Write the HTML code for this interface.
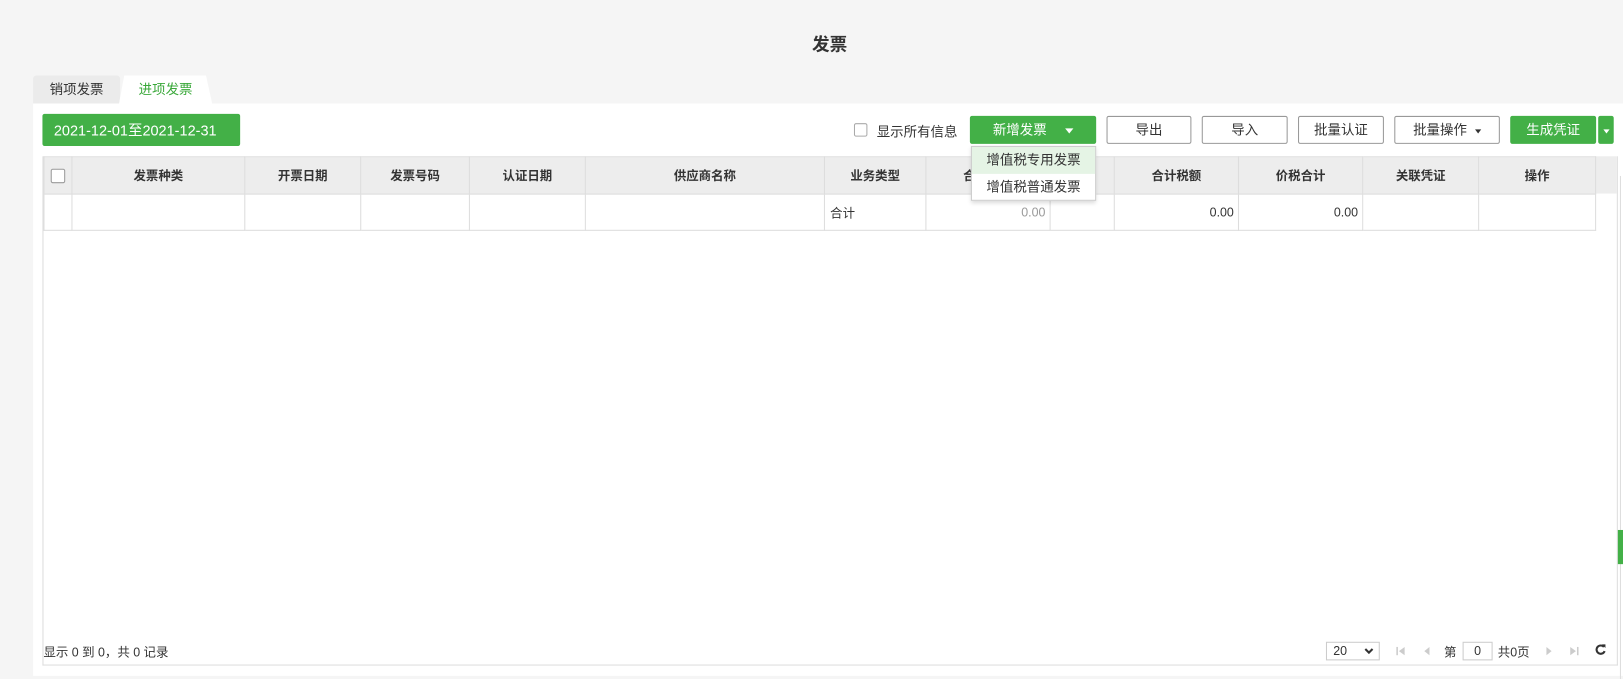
<!DOCTYPE html>
<html><head><meta charset="utf-8"><style>
*{margin:0;padding:0;box-sizing:border-box}
html,body{width:1623px;height:679px;overflow:hidden;background:#f5f5f5}
body{font-family:"Liberation Sans","Noto Sans CJK SC",sans-serif;font-size:13px;color:#333;position:relative}
#w{position:absolute;left:0;top:0;width:1568px;height:656px;transform:scale(1.0351);transform-origin:0 0}
.a{position:absolute}
.title{left:0;width:1603px;top:29px;text-align:center;font-size:17px;font-weight:bold;color:#333}
.panel{left:32px;top:100px;width:1536px;height:553px;background:#fff}
.btn{position:absolute;top:112px;height:27px;border:1px solid #999;border-radius:2px;background:#fff;text-align:center;line-height:25px;font-size:13px;color:#333}
.g{background:#43b047;border-color:#43b047;color:#fff}
.tri{display:inline-block;width:0;height:0;border-left:4px solid transparent;border-right:4px solid transparent;border-top:5px solid currentColor;vertical-align:middle}
table{border-collapse:collapse;position:absolute;left:42px;top:151px;table-layout:fixed}
td,th{border:1px solid #ddd;height:36px;font-size:12px}
th{background:#ededed;font-weight:bold;color:#333}
td{height:35px;text-align:right;padding-right:4px;color:#555}
.pg{font-size:9px;color:#ccc}
</style></head><body><div id="w">
<div class="a title">发票</div>
<div class="a" style="left:32px;top:73px;width:84px;height:27px;background:#ebebeb;border-radius:3px 3px 0 0;text-align:center;line-height:27px;color:#333">销项发票</div>
<div class="a" style="left:115px;top:73px;width:90px;height:27px;background:#fff;clip-path:polygon(5px 0,84px 0,100% 100%,0 100%);text-align:center;line-height:27px;color:#3aa83a">进项发票</div>
<div class="a panel"></div>
<div class="btn g" style="left:41px;top:110px;width:191px;height:31px;line-height:31px;text-align:left;padding-left:10px;font-size:14px">2021-12-01至2021-12-31 <span class="tri" style="margin-left:10px"></span></div>
<div class="a" style="left:825px;top:119px;width:13px;height:13px;border:1px solid #aaa;border-radius:2px"></div>
<div class="a" style="left:847px;top:117px;font-size:13px">显示所有信息</div>
<div class="btn g" style="left:937px;width:122px">新增发票 <span class="tri" style="margin-left:14px"></span></div>
<div class="btn" style="left:1069px;width:82px">导出</div>
<div class="btn" style="left:1161px;width:83px">导入</div>
<div class="btn" style="left:1254px;width:83px">批量认证</div>
<div class="btn" style="left:1347px;width:102px">批量操作 <span class="tri" style="margin-left:4px;border-top-width:4px;border-left-width:3px;border-right-width:3px"></span></div>
<div class="btn g" style="left:1459px;width:83px">生成凭证</div>
<div class="btn g" style="left:1544px;width:15px;padding:0"><span class="tri" style="border-left-width:3px;border-right-width:3px;border-top-width:4px"></span></div>
<div class="a" style="left:41px;top:151px;width:1522px;height:492px;border:1px solid #ddd;border-top:none"></div>
<div class="a" style="left:1541px;top:151px;width:21px;height:36px;background:#ededed"></div>
<div class="a" style="left:1565px;top:170px;width:1px;height:486px;background:#ddd"></div>
<div class="a" style="left:1563px;top:512px;width:5px;height:33px;background:#43b047"></div>
<table>
<colgroup><col style="width:27px"><col style="width:167px"><col style="width:112px"><col style="width:105px"><col style="width:112px"><col style="width:231px"><col style="width:98px"><col style="width:120px"><col style="width:62px"><col style="width:120px"><col style="width:120px"><col style="width:112px"><col style="width:113px"></colgroup>
<tr><th><div style="width:14px;height:14px;border:1px solid #999;border-radius:2px;margin:auto;background:#fff"></div></th><th>发票种类</th><th>开票日期</th><th>发票号码</th><th>认证日期</th><th>供应商名称</th><th>业务类型</th><th>合计金额</th><th></th><th>合计税额</th><th>价税合计</th><th>关联凭证</th><th>操作</th></tr>
<tr><td></td><td></td><td></td><td></td><td></td><td></td><td style="text-align:left;padding-left:5px;color:#333">合计</td><td style="color:#999">0.00</td><td></td><td style="color:#333">0.00</td><td style="color:#333">0.00</td><td></td><td></td></tr>
</table>
<div class="a" style="left:938px;top:141px;width:121px;height:53px;background:#fff;border:1px solid #ccc;box-shadow:0 2px 4px rgba(0,0,0,.15)">
<div style="height:26px;line-height:26px;text-align:center;background:#e5f4e5">增值税专用发票</div>
<div style="height:26px;line-height:26px;text-align:center">增值税普通发票</div></div>
<div class="a" style="left:42px;top:621px;font-size:12px">显示 0 到 0，共 0 记录</div>
<div class="a" style="left:1281px;top:620px;width:52px;height:18px;border:1px solid #ccc;font-size:12px;line-height:16px;padding-left:6px">20<svg style="position:absolute;right:5px;top:5px" width="9" height="6"><path d="M1 1L4.5 4.5L8 1" stroke="#333" stroke-width="2" fill="none"/></svg></div>
<svg class="a" style="left:1348px;top:624px" width="10" height="10"><rect x="1" y="1" width="1.5" height="8" fill="#ccc"/><path d="M9 1L3.5 5L9 9Z" fill="#ccc"/></svg>
<svg class="a" style="left:1374px;top:624px" width="8" height="10"><path d="M7 1L2 5L7 9Z" fill="#ccc"/></svg>
<div class="a" style="left:1395px;top:621px;font-size:12px">第</div>
<div class="a" style="left:1413px;top:620px;width:29px;height:18px;border:1px solid #ccc;text-align:center;font-size:12px;line-height:16px">0</div>
<div class="a" style="left:1447px;top:621px;font-size:12px">共0页</div>
<svg class="a" style="left:1493px;top:624px" width="8" height="10"><path d="M1 1L6 5L1 9Z" fill="#ccc"/></svg>
<svg class="a" style="left:1516px;top:624px" width="10" height="10"><path d="M1 1L6.5 5L1 9Z" fill="#ccc"/><rect x="7.5" y="1" width="1.5" height="8" fill="#ccc"/></svg>
<svg class="a" style="left:1541px;top:622px" width="11" height="11"><path d="M8.5 3A4 4 0 1 0 9.2 7" stroke="#333" stroke-width="2" fill="none"/><path d="M6.5 0.5L10 0.5L10 4Z" fill="#333"/></svg>
</div></body></html>
